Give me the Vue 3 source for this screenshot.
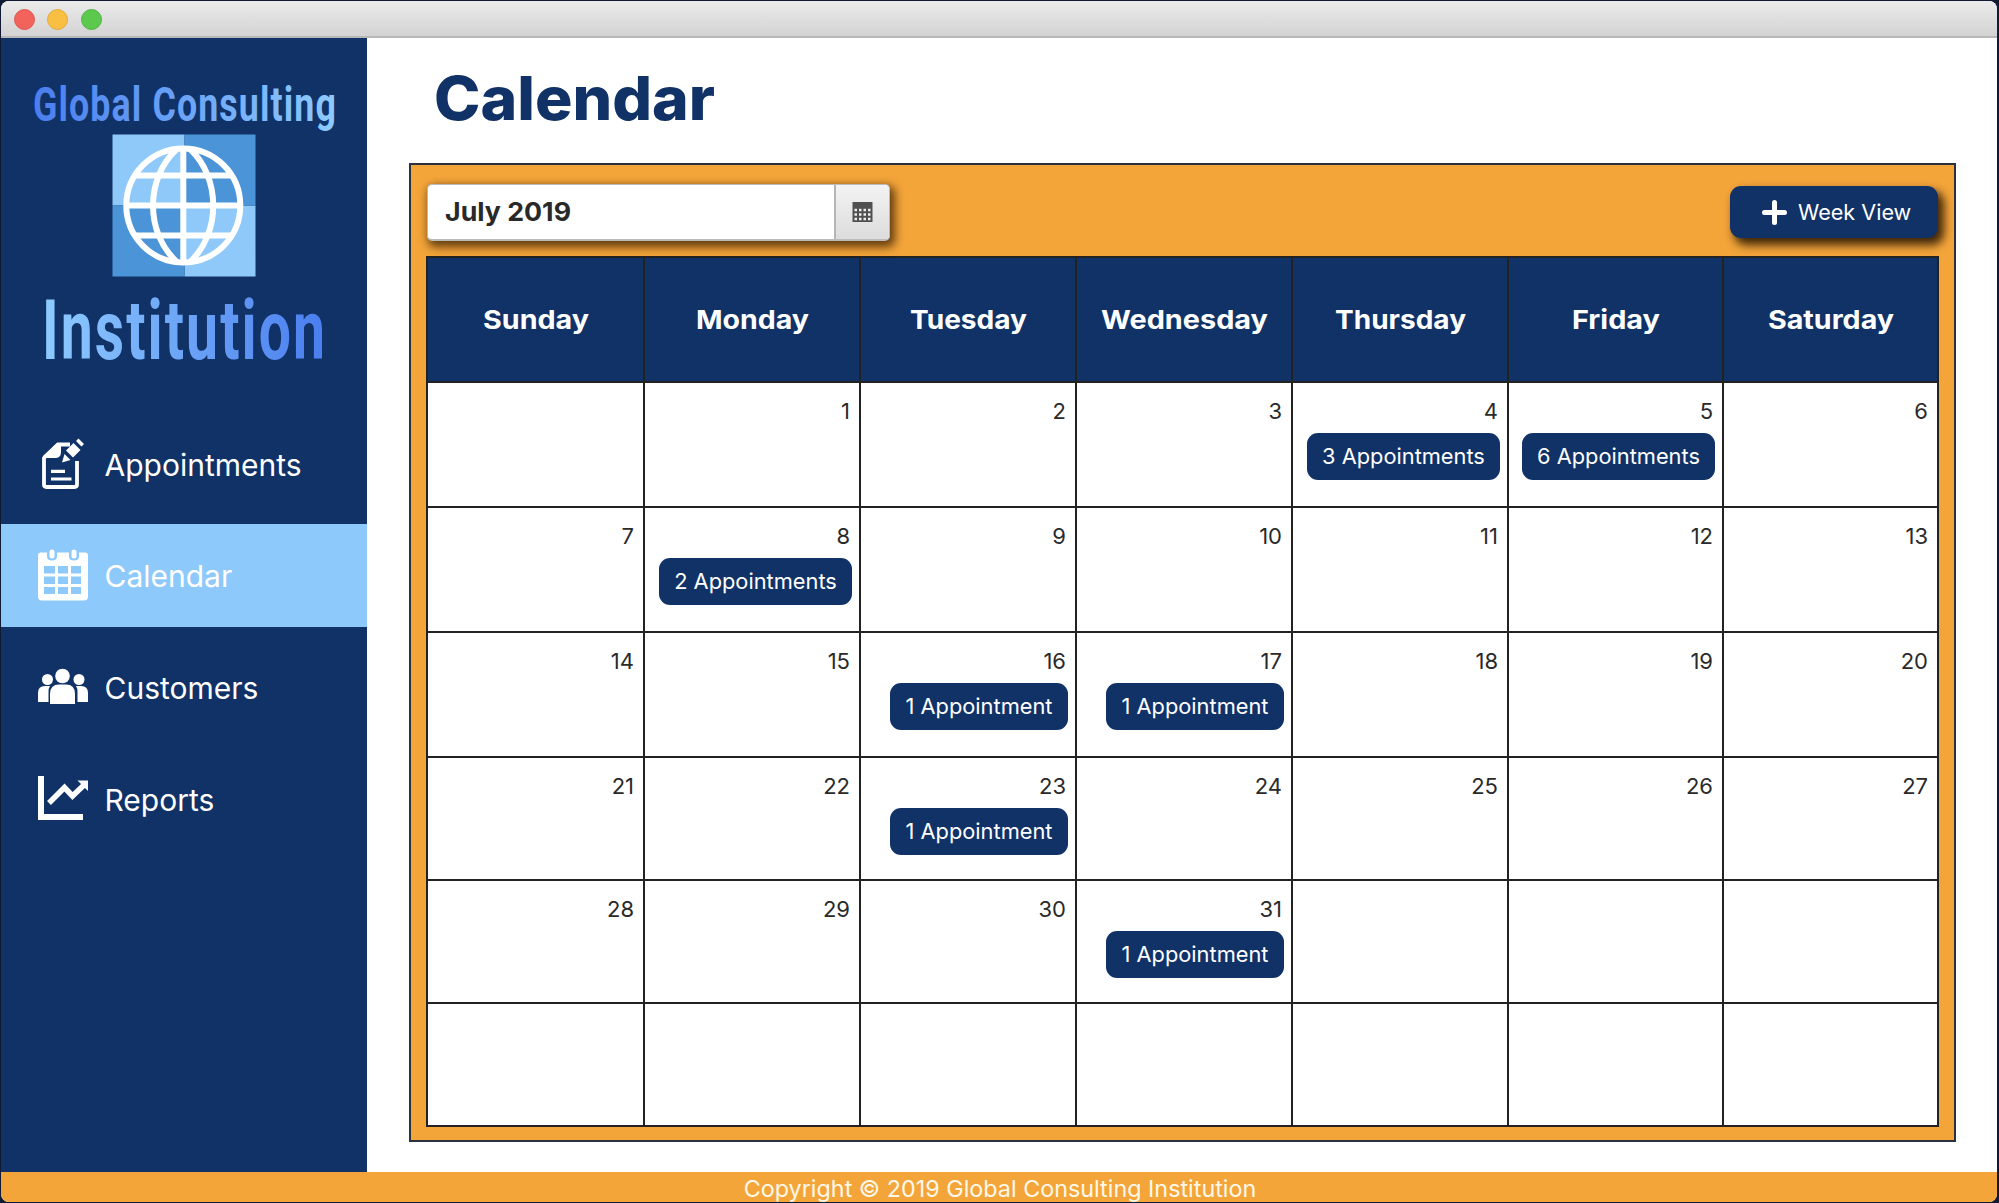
<script setup>
const days = ['Sunday', 'Monday', 'Tuesday', 'Wednesday', 'Thursday', 'Friday', 'Saturday']
const dayWidths = [106, 113, 117, 167, 131, 88, 126]
const counts = { 4: 3, 5: 6, 8: 2, 16: 1, 17: 1, 23: 1, 31: 1 }
const cells = Array.from({ length: 42 }, (_, i) => (i >= 1 && i <= 31 ? i : null))
const label = (n) => `${n} Appointment${n > 1 ? 's' : ''}`
</script>

<template>
  <div class="desktop">
    <div class="window">
      <header class="titlebar">
        <i class="dot red"></i><i class="dot yellow"></i><i class="dot green"></i>
      </header>
      <div class="body">
        <aside class="sidebar">
          <svg class="logo" width="366" height="374" viewBox="1 38 366 374">
            <defs>
              <linearGradient id="lg1" x1="0" y1="0" x2="1" y2="0">
                <stop offset="0" stop-color="#4a7dee" /><stop offset="1" stop-color="#8ecbff" />
              </linearGradient>
              <linearGradient id="lg2" x1="0" y1="0" x2="1" y2="0">
                <stop offset="0" stop-color="#8ecbff" /><stop offset="1" stop-color="#4a7dee" />
              </linearGradient>
            </defs>
            <text class="brand" x="33" y="120.500" font-size="48" letter-spacing="1.5" textLength="304" lengthAdjust="spacingAndGlyphs" fill="url(#lg1)">Global Consulting</text>
            <path d="M112.500 134.500h72v71h71v71h-71v-71h-72z" fill="#8ec9fa" />
            <path d="M184.500 134.500h71v71h-71zM112.500 205.500h72v71h-72z" fill="#4b94d8" />
            <g fill="none" stroke="#fff" stroke-width="6">
              <circle cx="183.300" cy="205.500" r="57" />
              <path d="M183.300 148v115M126 205.500h115M136 175.500h95M136 235.500h95" />
              <path d="M177 149C145 178 145 233 177 262M190 149C221 178 221 233 190 262" />
            </g>
            <text class="brand" x="42" y="358.500" font-size="83" letter-spacing="3" textLength="285" lengthAdjust="spacingAndGlyphs" fill="url(#lg2)">Institution</text>
          </svg>
          <nav>
            <a class="item">
              <svg class="ico" width="52" height="56" viewBox="37 436 52 56">
                <path d="M70 444.500H58L44 458v26.500q0 2.500 2.500 2.500h28q2.500 0 2.500-2.500V461" fill="none" stroke="#fff" stroke-width="3.800" />
                <path d="M57 443h4v9q0 6-6 6H43v-2z" fill="#fff" />
                <path d="M51 471.300h14M51 479h20.500" stroke="#fff" stroke-width="3.200" />
                <path d="M62 462.500l2.500-8.500 6 6zM66 450.500l7.500-7.500 7 7-7.500 7.500zM76 441l2.500-2.500 5.500 5.500-2.500 2.500z" fill="#fff" />
              </svg>
              <span>Appointments</span>
            </a>
            <a class="item active">
              <svg class="ico" width="52" height="56" viewBox="37 547.500 52 56">
                <path fill="#fff" fill-rule="evenodd" d="M38 556q0-3 3-3h6v4q0 4 5 4t5-4v-4h12v4q0 4 5 4t5-4v-4h6q3 0 3 3v41q0 4-4 4H42q-4 0-4-4zM44 566.500v7.500h11v-7.500zM58 566.500v7.500h10v-7.500zM71 566.500v7.500h10v-7.500zM44 577v7.500h11V577zM58 577v7.500h10V577zM71 577v7.500h10V577zM44 587.500v7h11v-7zM58 587.500v7h10v-7zM71 587.500v7h10v-7z" />
                <path d="M52 552.500v4M74 552.500v4" stroke="#fff" stroke-width="5" stroke-linecap="round" />
              </svg>
              <span>Calendar</span>
            </a>
            <a class="item">
              <svg class="ico" width="52" height="56" viewBox="37 659 52 56">
                <g fill="#fff">
                  <circle cx="47.500" cy="679.500" r="5.500" /><circle cx="79" cy="679.500" r="5.500" />
                  <circle cx="62.500" cy="676" r="7.300" />
                  <path d="M38 702v-9q0-7 7-7h5q-1.500 2-1.500 6v10zM88 702v-9q0-7-7-7h-5q1.500 2 1.500 6v10z" />
                  <path d="M50 704v-10q0-9.500 9-9.500h7q9 0 9 9.500v10z" />
                </g>
              </svg>
              <span>Customers</span>
            </a>
            <a class="item">
              <svg class="ico" width="52" height="56" viewBox="37 771 52 56">
                <path d="M41 776v41h42" fill="none" stroke="#fff" stroke-width="6" />
                <path d="M49 803l15.500-15.500 8 8.500 11-10.500" fill="none" stroke="#fff" stroke-width="5.500" />
                <path d="M77.500 780.500H88V791z" fill="#fff" />
              </svg>
              <span>Reports</span>
            </a>
          </nav>
        </aside>
        <main>
          <h1>
            <svg width="300" height="74"><text x="0" y="58" font-size="60.500" textLength="281" lengthAdjust="spacingAndGlyphs">Calendar</text></svg>
          </h1>
          <section class="panel">
            <div class="toolbar">
              <div class="picker">
                <div class="field">
                  <svg width="200" height="50"><text x="17" y="36" font-size="26" textLength="126" lengthAdjust="spacingAndGlyphs">July 2019</text></svg>
                </div>
                <div class="pick">
                  <svg width="22" height="22" viewBox="0 0 22 22">
                    <path d="M.5 1h20v20H.5z" fill="#505050" />
                    <path d="M2.500 9h16M2.500 13.500h16M2.500 18h16" stroke="#eee" stroke-width="2.500" stroke-dasharray="2.500 2" />
                  </svg>
                </div>
              </div>
              <button class="week">
                <svg width="25" height="25" viewBox="0 0 25 25"><path d="M12.500 2.500v20M2.500 12.500h20" stroke="#fff" stroke-width="5" stroke-linecap="round" /></svg>
                <span>Week View</span>
              </button>
            </div>
            <div class="grid">
              <div v-for="(d, i) in days" :key="d" class="head">
                <svg :width="dayWidths[i]" height="40"><text x="0" y="29" font-size="26" :textLength="dayWidths[i]" lengthAdjust="spacingAndGlyphs">{{ d }}</text></svg>
              </div>
              <div v-for="(n, i) in cells" :key="i" class="cell">
                <span v-if="n" class="num">{{ n }}</span>
                <span v-if="counts[n]" class="badge" :class="{ single: counts[n] === 1 }">{{ label(counts[n]) }}</span>
              </div>
            </div>
          </section>
        </main>
      </div>
      <footer><span>Copyright © 2019 Global Consulting Institution</span></footer>
    </div>
  </div>
</template>

<style>
body { margin: 0; overflow: hidden; }
</style>

<style scoped>
* { box-sizing: border-box; }
.desktop { width: 1999px; height: 1203px; background: #101a33; padding: 1px 2px 1px 1px; font-family: Inter, "Liberation Sans", sans-serif; }
.window { height: 1201px; display: flex; flex-direction: column; border-radius: 8px; overflow: hidden; background: #fff; }
.titlebar { height: 37px; flex: none; display: flex; align-items: center; gap: 12.300px; padding: 2px 0 0 13px; background: linear-gradient(#ebebeb, #d3d3d3); border-bottom: 2px solid #b8b8b8; }
.dot { width: 21px; height: 21px; border-radius: 50%; border: 1px solid; }
.red { background: #f1635b; border-color: #dc5750; }
.yellow { background: #f8bf43; border-color: #dfab3d; }
.green { background: #5cc84d; border-color: #50b343; }
.body { flex: 1; display: flex; min-height: 0; }
.sidebar { width: 366px; flex: none; background: #103267; }
.logo { display: block; overflow: visible; }
.brand { font-family: Roboto, sans-serif; font-weight: 700; }
nav { display: flex; flex-direction: column; gap: 8.200px; }
.item { height: 103.500px; display: flex; align-items: center; padding-left: 36px; color: #fff; font-size: 30px; }
.item span { padding-top: 2px; }
.item.active { background: #8ec9fb; }
.ico { flex: none; margin-right: 15.500px; }
main { flex: 1; padding: 24px 0 0 42px; }
h1 { margin: 0; height: 101px; padding-left: 25px; }
h1 text { font-weight: 800; fill: #103267; }
.panel { width: 1547px; height: 979px; background: #f4a53a; border: 2px solid #2c3140; padding: 0 16px 16px 15px; }
.toolbar { height: 91px; display: flex; align-items: flex-start; justify-content: space-between; }
.picker { width: 463px; height: 57px; margin: 19px 0 0 1px; display: flex; background: #fff; border: 1px solid #bbb; border-bottom: 2px solid #bbb; border-radius: 5px; box-shadow: 3px 4px 10px 2px rgba(50, 25, 0, .75); }
.field { flex: 1; }
.field text { font-weight: 700; fill: #292929; }
.pick { width: 55px; border-left: 2px solid #b5b5b5; background: linear-gradient(#f3f3f3, #dcdcdc); display: flex; align-items: center; justify-content: center; border-radius: 0 4px 4px 0; }
.week { width: 208px; height: 52px; margin: 21px 0 0; border: 0; border-radius: 11px; background: #103267; color: #fff; display: flex; align-items: center; padding: 0 0 0 32px; gap: 11px; font: 21.600px Inter, sans-serif; box-shadow: 5px 6px 10px 1px rgba(30, 15, 0, .85); }
.grid { width: 1513px; height: 871px; display: grid; grid-template-columns: 215px 214px 214px 214px 214px 213px 213px; grid-template-rows: 123px 123px 123px 123px 121px 121px 121px; gap: 2px; padding: 2px; background: #222; }
.head { background: #103267; display: flex; align-items: center; justify-content: center; }
.head text { font-weight: 700; fill: #fff; }
.head svg, h1 svg, .field svg { overflow: visible; display: block; }
.cell { background: #fff; display: flex; flex-direction: column; align-items: flex-end; padding: 14px 7px 0 0; }
.num { font-size: 22px; line-height: 28px; color: #2a2a2a; padding-right: 2px; }
.badge { margin-top: 8px; width: 193px; height: 47px; padding-bottom: 1px; border-radius: 11px; background: #103267; color: #fff; font-size: 21.800px; display: flex; align-items: center; justify-content: center; white-space: nowrap; }
.badge.single { width: 178px; }
footer { height: 30px; flex: none; background: #f4a53a; color: #fff8e8; display: flex; align-items: center; justify-content: center; padding: 2px 0 0 2px; font-size: 23.350px; }
</style>
